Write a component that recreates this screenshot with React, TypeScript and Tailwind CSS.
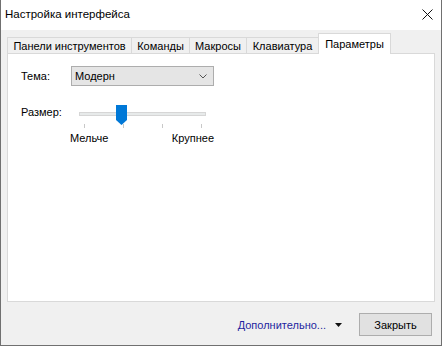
import React from 'react'

const tabs = [
  { label: 'Панели инструментов', w: 'w-[124px]' },
  { label: 'Команды', w: 'w-[58px]' },
  { label: 'Макросы', w: 'w-[57px]' },
  { label: 'Клавиатура', w: 'w-[72px]' },
]

function Slider() {
  return (
    <div className="relative w-[144px] h-[38px]">
      <div className="mt-[7px] ml-[9px] w-[127px] h-[4px] bg-[#e7eaea] border border-[#d6d6d6]" />
      <svg className="absolute left-[46px] top-0" width="11" height="20" viewBox="0 0 11 20">
        <path d="M0 0 H11 V15 L5.5 20 L0 15 Z" fill="#0078d7" />
      </svg>
      <div className="flex mt-[8px] ml-[14px] gap-[38px]">
        <div className="w-px h-[4px] bg-[#c8c8c8]" />
        <div className="w-px h-[4px] bg-[#c8c8c8]" />
        <div className="w-px h-[4px] bg-[#c8c8c8]" />
        <div className="w-px h-[4px] bg-[#c8c8c8]" />
      </div>
    </div>
  )
}

export default function App() {
  return (
    <div
      className="w-[442px] h-[346px] flex flex-col border-x border-b border-[#707070] text-[11px] leading-[16px] text-black whitespace-nowrap"
      style={{ fontFamily: '"Liberation Sans", Arial, sans-serif' }}
    >
      {/* title bar */}
      <div className="h-[30px] bg-white flex items-center justify-between pl-[4px] pr-[8px] pb-[2px]">
        <span className="text-[11.5px]">Настройка интерфейса</span>
        <svg width="11" height="11" viewBox="0 0 11 11">
          <path d="M0.5 0.5 L10.5 10.5 M10.5 0.5 L0.5 10.5" stroke="#111" strokeWidth="1" />
        </svg>
      </div>

      <div className="flex-1 bg-[#f0f0f0] flex flex-col px-[6px] pt-[3px]">
        {/* tabs */}
        <div className="flex items-end h-[20px]">
          {tabs.map((t) => (
            <div
              key={t.label}
              className={`${t.w} h-[16px] border-t border-l border-[#d9d9d9] flex items-center justify-center`}
            >
              {t.label}
            </div>
          ))}
          <div className="relative z-10 w-[73px] h-[21px] -mb-px bg-white border-t border-x border-[#d9d9d9] flex items-center justify-center pb-[1px]">
            Параметры
          </div>
        </div>

        {/* panel */}
        <div className="h-[249px] bg-white border border-[#d9d9d9] pt-[12px] pl-[13px]">
          <div className="flex items-center">
            <span className="w-[50px]">Тема:</span>
            <div className="w-[143px] h-[20px] bg-[#e5e5e5] border border-[#adadad] flex items-center justify-between pl-[3px] pr-[6px]">
              <span>Модерн</span>
              <svg width="8" height="5" viewBox="0 0 8 5">
                <path d="M0.5 0.5 L4 4 L7.5 0.5" fill="none" stroke="#555" strokeWidth="1" />
              </svg>
            </div>
          </div>

          <div className="flex items-start mt-[19px]">
            <span className="w-[49px] -mt-[1px]">Размер:</span>
            <div className="flex flex-col">
              <Slider />
              <div className="flex justify-between w-[144px] -mt-[13px]">
                <span>Мельче</span>
                <span>Крупнее</span>
              </div>
            </div>
          </div>
        </div>

        {/* footer */}
        <div className="flex items-center justify-end pt-[11px] pr-[3px]">
          <span className="text-[#1f1f9f]">Дополнительно...</span>
          <svg className="ml-[9px]" width="7" height="4" viewBox="0 0 7 4">
            <path d="M0 0 H7 L3.5 4 Z" fill="#111" />
          </svg>
          <button className="ml-[17px] w-[73px] h-[23px] bg-[#e1e1e1] border border-[#adadad] flex items-center justify-center">
            Закрыть
          </button>
        </div>
      </div>
    </div>
  )
}
